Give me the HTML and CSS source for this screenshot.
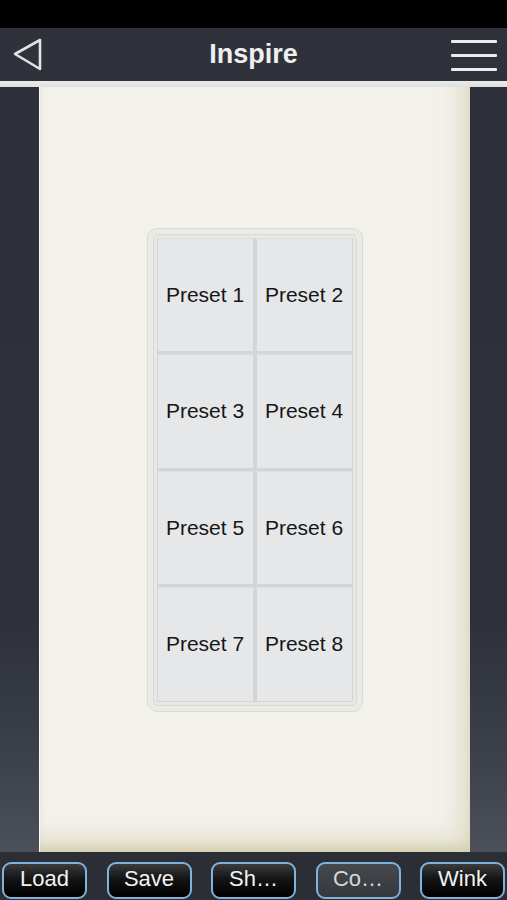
FILE: index.html
```html
<!DOCTYPE html>
<html>
<head>
<meta charset="utf-8">
<link rel="stylesheet" href="styles.css">
</head>
<body>
<div class="status"></div>
<header class="nav">
  <svg class="back" width="34" height="36" viewBox="0 0 34 36">
    <polygon points="3,16 28,2 28,31" fill="none" stroke="#e2e2e2" stroke-width="2.6" stroke-linejoin="round"/>
  </svg>
  <h1 class="title">Inspire</h1>
  <svg class="menu" width="46" height="32" viewBox="0 0 46 32">
    <rect x="0" y="1" width="46" height="3" rx="1" fill="#ececec"/>
    <rect x="0" y="15" width="46" height="3" rx="1" fill="#ececec"/>
    <rect x="0" y="29" width="46" height="3" rx="1" fill="#ececec"/>
  </svg>
</header>
<div class="strip"></div>
<main class="main">
  <div class="side"></div>
  <section class="plate">
    <div class="frame">
      <div class="frame-inner">
        <div class="grid">
          <button class="preset">Preset 1</button>
          <button class="preset">Preset 2</button>
          <button class="preset">Preset 3</button>
          <button class="preset">Preset 4</button>
          <button class="preset">Preset 5</button>
          <button class="preset">Preset 6</button>
          <button class="preset">Preset 7</button>
          <button class="preset">Preset 8</button>
        </div>
      </div>
    </div>
  </section>
  <div class="side side-right"></div>
</main>
<footer class="toolbar">
  <button class="tb">Load</button>
  <button class="tb">Save</button>
  <button class="tb">Sh…</button>
  <button class="tb tb-dim">Co…</button>
  <button class="tb">Wink</button>
</footer>
</body>
</html>
```
FILE: styles.css
```css
* { box-sizing: border-box; }
html, body { margin: 0; padding: 0; }
body {
  width: 507px;
  height: 900px;
  background: #000;
  font-family: "Liberation Sans", Arial, sans-serif;
  overflow: hidden;
}
.status { height: 28px; background: #000; }
.nav {
  height: 53px;
  background: #2f323a;
  display: grid;
  grid-template-columns: 80px 1fr 80px;
  align-items: center;
}
.back { margin-left: 12px; margin-top: 2px; }
.title {
  margin: 0;
  text-align: center;
  color: #efefef;
  font-size: 27px;
  font-weight: bold;
}
.menu { justify-self: end; margin-right: 10px; }
.strip {
  height: 6px;
  background: linear-gradient(#e9eaea, #dfe0e1);
}
.main {
  height: 765px;
  display: flex;
  background: linear-gradient(#2d3038 0%, #2e3139 70%, #3c414a 88%, #4b505a 100%);
}
.side { width: 39px; }
.side-right { width: 37px; }
.plate {
  width: 431px;
  background: #f2f1eb;
  border-left: 1px solid #fbfbf8;
  box-shadow:
    inset -16px -20px 24px -10px rgba(200, 192, 145, 0.5),
    inset 0 -8px 10px -4px rgba(190, 180, 130, 0.4);
  display: flex;
  align-items: center;
  justify-content: center;
}
.frame {
  width: 216px;
  height: 484px;
  border: 1px solid #dcdcd6;
  border-radius: 10px;
  background: #ebebe6;
  padding: 5px;
  margin-left: -1px;
}
.frame-inner {
  height: 100%;
  border: 1px solid #d9d9d5;
  border-radius: 5px;
  background: #e7e7e4;
  padding: 3px;
}
.grid {
  height: 100%;
  display: grid;
  grid-template-columns: 1fr 1fr;
  grid-template-rows: repeat(4, 1fr);
  gap: 2px;
  background: #d3d5d6;
}
.preset {
  margin: 0;
  padding: 0;
  border: 1px solid #d3d5d6;
  border-top-color: #dcdedf;
  background: #e6e7e8;
  font-family: "Liberation Sans", Arial, sans-serif;
  font-size: 21px;
  color: #161616;
  white-space: nowrap;
}
.toolbar {
  height: 48px;
  background: #2b2e35;
  display: flex;
  justify-content: space-between;
  padding: 10px 2px 1px 2px;
}
.tb {
  width: 85px;
  height: 37px;
  margin: 0;
  padding: 0 0 3px 0;
  border: 2px solid #7fb2dc;
  border-radius: 9px;
  background: linear-gradient(#3a3b3d 0%, #141414 45%, #000 100%);
  color: #f2f2f2;
  font-family: "Liberation Sans", Arial, sans-serif;
  font-size: 22px;
}
.tb-dim {
  background: linear-gradient(#45484d, #35383d);
  color: #d8d8d8;
}
```
